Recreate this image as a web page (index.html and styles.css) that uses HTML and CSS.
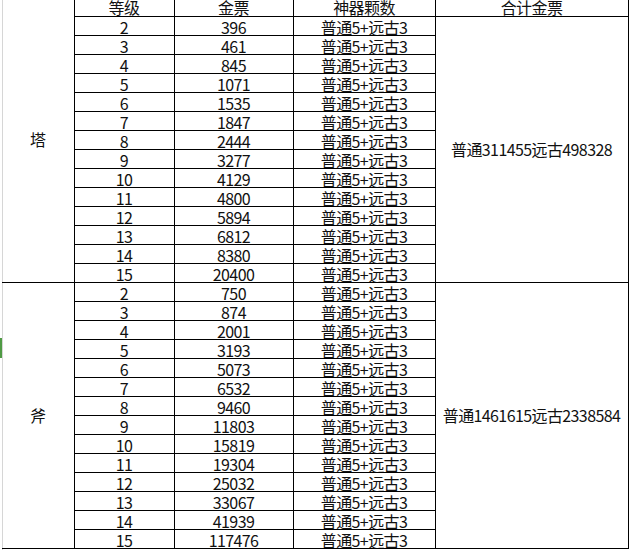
FILE: index.html
```html
<!DOCTYPE html>
<html lang="zh-CN">
<head>
<meta charset="utf-8">
<title>神器金票</title>
<link rel="stylesheet" href="styles.css">
</head>
<body>
<div class="sheet">
  <span class="row-marker"></span>
  <table class="grid">
    <colgroup>
      <col class="c-group">
      <col class="c-level">
      <col class="c-ticket">
      <col class="c-count">
      <col class="c-total">
    </colgroup>
    <tbody>
      <tr class="head">
        <td class="group" rowspan="15">塔</td>
        <td>等级</td><td>金票</td><td>神器颗数</td><td>合计金票</td>
      </tr>
      <tr><td>2</td><td>396</td><td class="link">普通5+远古3</td><td class="total" rowspan="14">普通311455远古498328</td></tr>
      <tr><td>3</td><td>461</td><td class="link">普通5+远古3</td></tr>
      <tr><td>4</td><td>845</td><td class="link">普通5+远古3</td></tr>
      <tr><td>5</td><td>1071</td><td class="link">普通5+远古3</td></tr>
      <tr><td>6</td><td>1535</td><td class="link">普通5+远古3</td></tr>
      <tr><td>7</td><td>1847</td><td class="link">普通5+远古3</td></tr>
      <tr><td>8</td><td>2444</td><td class="link">普通5+远古3</td></tr>
      <tr><td>9</td><td>3277</td><td class="link">普通5+远古3</td></tr>
      <tr><td>10</td><td>4129</td><td class="link">普通5+远古3</td></tr>
      <tr><td>11</td><td>4800</td><td class="link">普通5+远古3</td></tr>
      <tr><td>12</td><td>5894</td><td class="link">普通5+远古3</td></tr>
      <tr><td>13</td><td>6812</td><td class="link">普通5+远古3</td></tr>
      <tr><td>14</td><td>8380</td><td class="link">普通5+远古3</td></tr>
      <tr><td>15</td><td>20400</td><td class="link">普通5+远古3</td></tr>
      <tr><td class="group" rowspan="14">斧</td><td>2</td><td>750</td><td class="link">普通5+远古3</td><td class="total" rowspan="14">普通1461615远古2338584</td></tr>
      <tr><td>3</td><td>874</td><td class="link">普通5+远古3</td></tr>
      <tr><td>4</td><td>2001</td><td class="link">普通5+远古3</td></tr>
      <tr><td>5</td><td>3193</td><td class="link">普通5+远古3</td></tr>
      <tr><td>6</td><td>5073</td><td class="link">普通5+远古3</td></tr>
      <tr><td>7</td><td>6532</td><td class="link">普通5+远古3</td></tr>
      <tr><td>8</td><td>9460</td><td class="link">普通5+远古3</td></tr>
      <tr><td>9</td><td>11803</td><td class="link">普通5+远古3</td></tr>
      <tr><td>10</td><td>15819</td><td class="link">普通5+远古3</td></tr>
      <tr><td>11</td><td>19304</td><td class="link">普通5+远古3</td></tr>
      <tr><td>12</td><td>25032</td><td class="link">普通5+远古3</td></tr>
      <tr><td>13</td><td>33067</td><td class="link">普通5+远古3</td></tr>
      <tr><td>14</td><td>41939</td><td class="link">普通5+远古3</td></tr>
      <tr><td>15</td><td>117476</td><td class="link">普通5+远古3</td></tr>
    </tbody>
  </table>
</div>
</body>
</html>
```
FILE: styles.css
```css
html, body {
  margin: 0;
  padding: 0;
  background: #ffffff;
}

body {
  font-family: "Noto Sans CJK SC", "Noto Sans", sans-serif;
  font-size: 16px;
  color: #111111;
  overflow: hidden;
}

.sheet {
  position: relative;
  width: 630px;
  height: 550px;
  overflow: hidden;
  box-sizing: border-box;
  padding-left: 2px;
}

.sheet::before {
  content: "";
  position: absolute;
  left: 2px;
  top: 0;
  bottom: 0;
  width: 1px;
  background: #d6d6d6;
}

.row-marker {
  position: absolute;
  left: 0;
  top: 338px;
  width: 2px;
  height: 20px;
  background: #4f9a44;
}

.grid {
  position: relative;
  border-collapse: collapse;
  table-layout: fixed;
  width: 626px;
  margin-top: -3px;
}

.c-group { width: 72px; }
.c-level { width: 100px; }
.c-ticket { width: 119px; }
.c-count { width: 142px; }
.c-total { width: 193px; }

.grid tr {
  height: 19px;
}

.grid td {
  padding: 2px 0 0 0;
  height: 16px;
  line-height: 16px;
  letter-spacing: -0.6px;
  text-align: center;
  vertical-align: middle;
  border: 1px solid #000000;
  white-space: nowrap;
  overflow: hidden;
}

.grid td.group,
.grid td.total {
  padding-top: 0;
}

.grid td.group {
  border-left: none;
  border-top: none;
}

.grid .head td {
  border-top: none;
}

.grid td.link {
  text-decoration: underline;
  text-underline-offset: 1px;
}
```
